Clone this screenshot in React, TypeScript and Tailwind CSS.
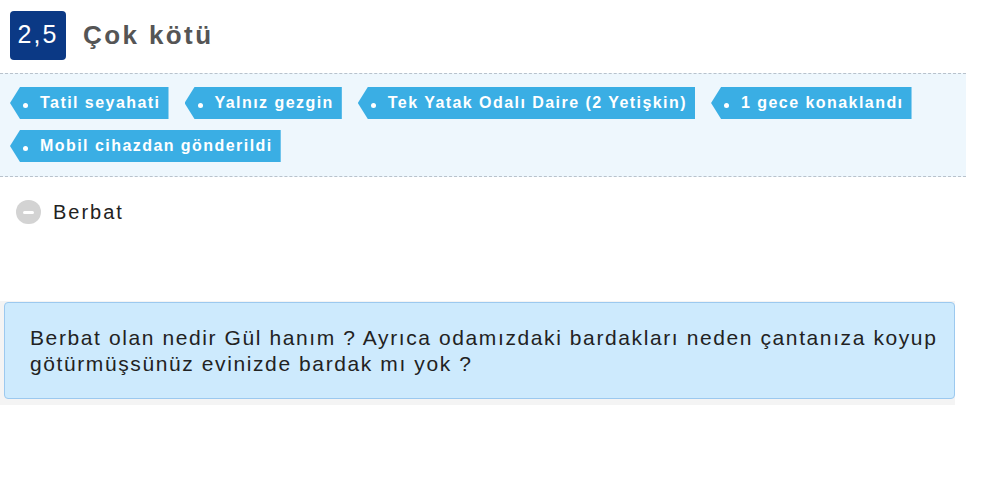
import React from 'react';

const tags = [
  'Tatil seyahati',
  'Yalnız gezgin',
  'Tek Yatak Odalı Daire (2 Yetişkin)',
  '1 gece konaklandı',
  'Mobil cihazdan gönderildi',
];

function Tag({ label }: { label: string }) {
  return (
    <div className="relative flex items-center h-[32px] pl-[30px] pr-[8px] bg-[#3aaee4] text-white text-[16px] font-bold tracking-[1.45px] [clip-path:polygon(10px_0,100%_0,100%_100%,10px_100%,0_50%)]">
      <span className="absolute left-[13px] top-[16px] w-[5px] h-[5px] rounded-full bg-white" />
      {label}
    </div>
  );
}

export default function App() {
  return (
    <div className="w-[996px] h-[498px] bg-white font-['Liberation_Sans',Arial,sans-serif] overflow-hidden">
      <div className="w-[966px]">
        {/* Rating header */}
        <div className="flex items-center h-[73px] pl-[10px] pb-[10px] pt-[7px]">
          <div className="w-[56px] h-[49px] rounded-[4px] bg-[#0b3985] text-white text-[25px] tracking-[2px] flex items-center justify-center">
            2,5
          </div>
          <span className="ml-[17px] text-[26px] font-bold tracking-[2.4px] text-[#555555]">Çok kötü</span>
        </div>

        {/* Trip tags */}
        <div className="border-y border-dashed border-[#b8c2cc] bg-[#eef7fd] pl-[10px] pt-[13px] pb-[14px] flex flex-wrap gap-x-[16px] gap-y-[11px]">
          {tags.map((t) => (
            <Tag key={t} label={t} />
          ))}
        </div>

        {/* Sentiment */}
        <div className="flex items-start pl-[16px] pt-[23px] h-[70px]">
          <div className="w-[25px] h-[24px] rounded-full bg-[#d3d3d3] flex items-center justify-center">
            <span className="block w-[11px] h-[3px] bg-white rounded-sm" />
          </div>
          <span className="ml-[12px] text-[20px] tracking-[2px] text-[#222222] leading-[24px]">Berbat</span>
        </div>
      </div>

      {/* Owner response */}
      <div className="w-[955px] mt-[54px] pt-[1px] pb-[6px] bg-[#f4f4f4]">
        <div className="ml-[4px] w-[951px] rounded-[4px] border border-[#9cc9ef] bg-[#cdeafd] pl-[25px] pr-[10px] pt-[22px] pb-[21px] text-[21px] tracking-[1.6px] leading-[26px] text-[#222222]">
          Berbat olan nedir Gül hanım ? Ayrıca odamızdaki bardakları neden çantanıza koyup götürmüşsünüz evinizde bardak mı yok ?
        </div>
      </div>
    </div>
  );
}
